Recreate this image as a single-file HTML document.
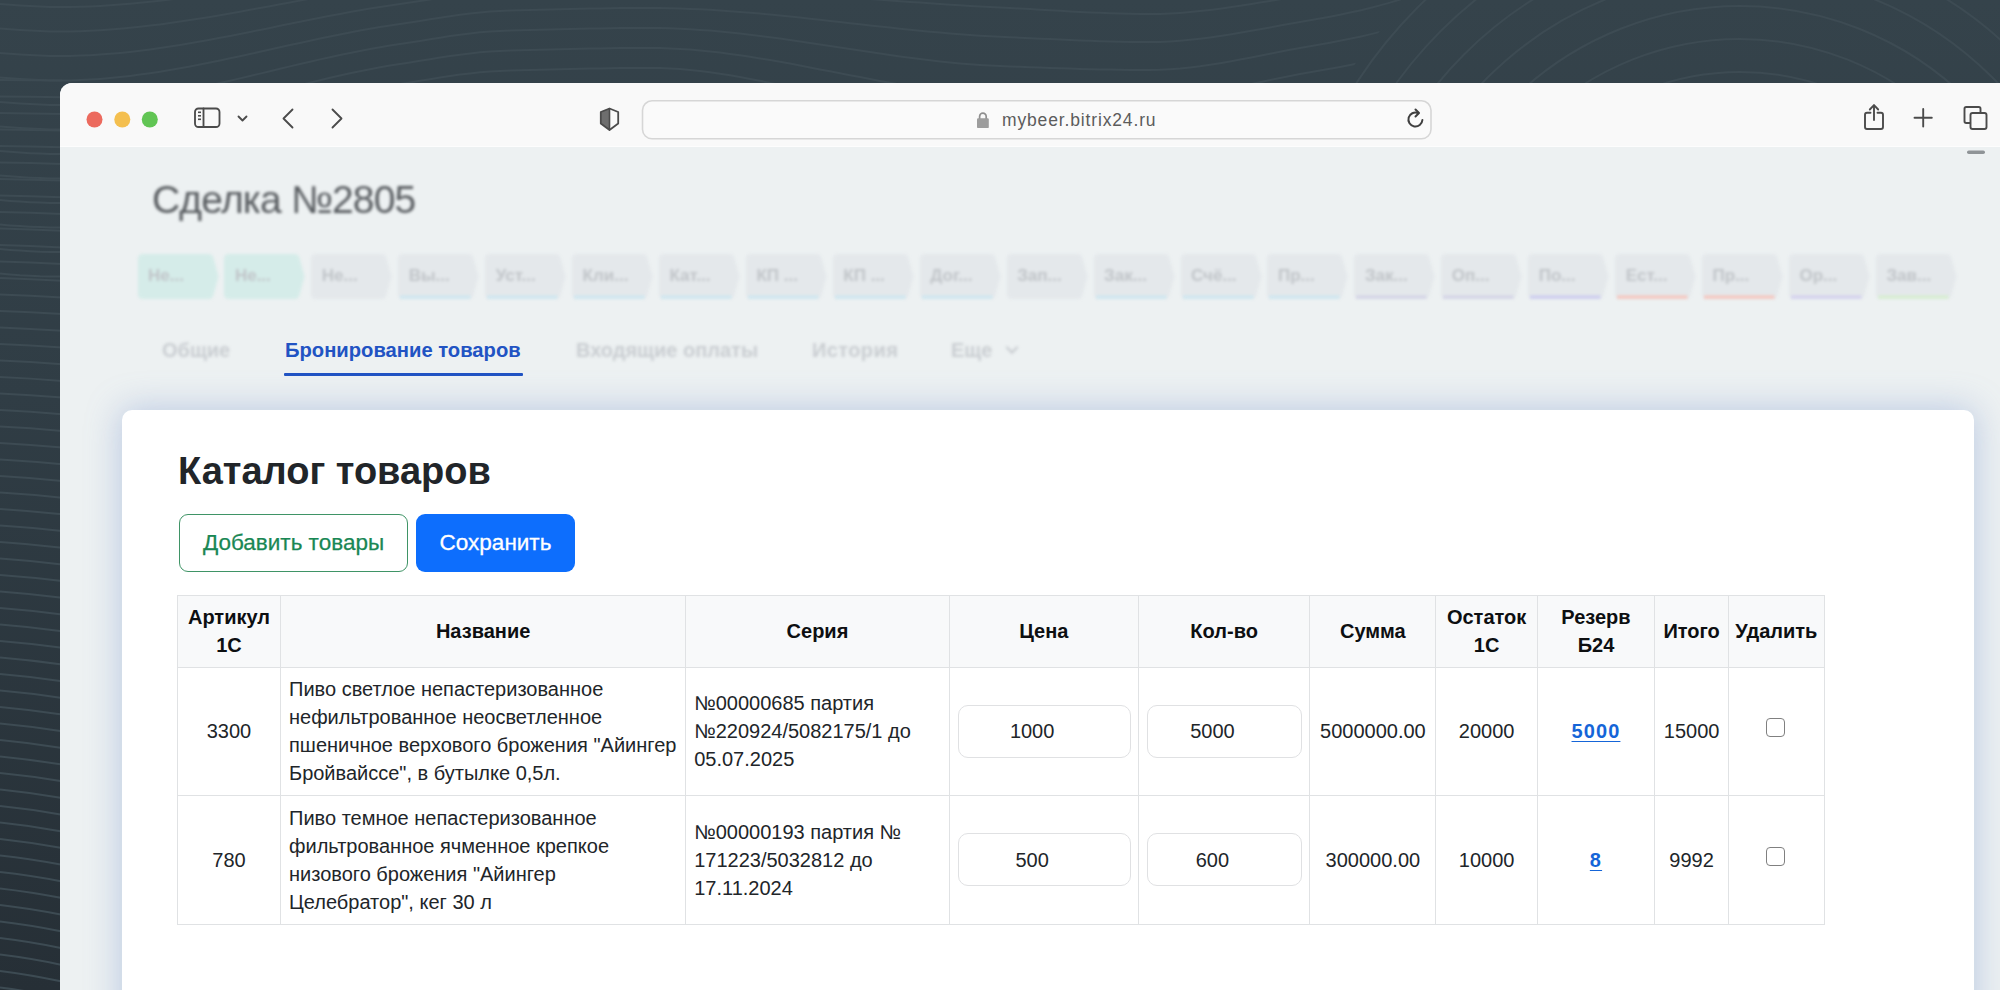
<!DOCTYPE html>
<html><head><meta charset="utf-8">
<style>
*{box-sizing:border-box}
html,body{margin:0;padding:0}
body{width:2000px;height:990px;overflow:hidden;position:relative;background:linear-gradient(180deg,#35434b 0%,#303d45 40%,#262f36 100%);font-family:"Liberation Sans",sans-serif;color:#212529}
.abs{position:absolute}
#bg{position:absolute;left:0;top:0}
#win{position:absolute;left:60px;top:83px;width:1980px;height:940px;border-top-left-radius:12px;overflow:hidden;background:#edf1f2}
#toolbar{position:absolute;left:0;top:0;width:1980px;height:64px;background:#f9f9f9;border-bottom:1.5px solid #fdfdfd}
.dot{position:absolute;width:16px;height:16px;border-radius:50%}
#blur{position:absolute;left:0;top:0;width:2000px;height:990px;filter:blur(1.4px)}
.title{position:absolute;left:152px;top:178.1px;font-size:39px;letter-spacing:-0.8px;color:#575b5f;white-space:nowrap;line-height:44px}
.stage{position:absolute;top:253.5px;width:81px;height:45px}
.stage span{position:absolute;left:12px;top:12px;font-size:16px;font-weight:700;color:#c3c7cb;white-space:nowrap}
.tab{position:absolute;top:337px;font-size:20px;font-weight:700;color:#c9cdd1;white-space:nowrap;line-height:26px}
#card{position:absolute;left:122px;top:410px;width:1852px;height:620px;background:#fff;border-radius:10px;box-shadow:0 0 34px 2px rgba(115,145,205,.40)}
.btn{display:flex;align-items:center;justify-content:center;font-size:22.5px;line-height:28px;white-space:nowrap}
#tbl{border-collapse:collapse;table-layout:fixed;width:1646.8px;font-size:20px;line-height:28px;color:#212529}
#tbl th,#tbl td{border:1px solid #e0e2e4;padding:7.75px 8px;vertical-align:middle;white-space:nowrap;overflow:visible}
#tbl th{background:#f8f9fa;font-weight:700;color:#0d0f11;text-align:center;height:70px;padding:7.5px 2px}
#tbl tr:not(.hd) td{height:126.5px}
#tbl td.c{text-align:center;padding:7.75px 2px}
#tbl td.l{text-align:left}
.inp{display:inline-flex;align-items:center;justify-content:center;height:53px;border:1px solid #e0e1e3;border-radius:10px;position:relative;top:-0.2px;left:0.3px;padding-right:24px;background:#fff}
#tbl a{color:#0d6efd;font-weight:700;text-decoration:underline;text-underline-offset:3px;text-decoration-thickness:1.2px;letter-spacing:1.1px;color:#1565d8}
.cb{display:inline-block;width:19px;height:19px;border:1.5px solid #808080;border-radius:4px;position:relative;top:-1px;left:-0.5px}
</style></head>
<body>
<svg id="bg" width="2000" height="990" viewBox="0 0 2000 990"><defs><mask id="m1"><rect x="0" y="0" width="2000" height="990" fill="#fff"/><circle cx="1740" cy="330" r="468" fill="#000"/></mask></defs><g fill="none" stroke="#3d4b53" stroke-width="2"><g mask="url(#m1)"><path d="M0,-20.5 L10,-19.8 L20,-19.1 L30,-18.4 L40,-17.9 L50,-17.6 L60,-17.5 L70,-17.6 L80,-17.7 L90,-18.1 L100,-18.5 L110,-19.0 L120,-19.6 L130,-20.3 L140,-21.1 L150,-22.0 L160,-23.0 L170,-24.0 L180,-25.1 L190,-26.3 L200,-27.6 L210,-28.8 L220,-30.2 L230,-31.5 L240,-32.9 L250,-34.4 L260,-35.9 L270,-37.3 L280,-38.8 L290,-40.3 L300,-41.9 L310,-43.4 L320,-44.9 L330,-46.4 L340,-47.8 L350,-49.3 L360,-50.7 L370,-52.1 L380,-53.4 L390,-54.7 L400,-56.0 L410,-57.3 L420,-58.8 L430,-60.4 L440,-62.0 L450,-63.6 L460,-65.1 L470,-66.4 L480,-67.6 L490,-68.5 L500,-69.0 L510,-69.3 L520,-69.6 L530,-69.9 L540,-70.1 L550,-70.3 L560,-70.5 L570,-70.7 L580,-70.9 L590,-71.0 L600,-71.2 L610,-71.3 L620,-71.5 L630,-71.6 L640,-71.8 L650,-72.0 L660,-72.2 L670,-72.5 L680,-72.7 L690,-73.0 L700,-73.2 L710,-73.5 L720,-73.8 L730,-74.1 L740,-74.4 L750,-74.7 L760,-75.0 L770,-75.4 L780,-75.7 L790,-76.0 L800,-76.3 L810,-76.6 L820,-76.9 L830,-77.2 L840,-77.5 L850,-77.8 L860,-78.1 L870,-78.3 L880,-78.6 L890,-78.8 L900,-79.1 L910,-79.3 L920,-79.5 L930,-79.6 L940,-79.8 L950,-79.9 L960,-80.0 L970,-80.1 L980,-80.2 L990,-80.2 L1000,-80.2 L1010,-80.1 L1020,-79.8 L1030,-79.2 L1040,-78.5 L1050,-77.6 L1060,-76.6 L1070,-75.6 L1080,-74.6 L1090,-73.6 L1100,-72.7 L1110,-71.8 L1120,-71.1 L1130,-70.5 L1140,-70.1 L1150,-70.0 L1160,-70.1 L1170,-70.3 L1180,-70.6 L1190,-71.1 L1200,-71.7 L1210,-72.4 L1220,-73.2 L1230,-74.1 L1240,-75.1 L1250,-76.1 L1260,-77.2 L1270,-78.4 L1280,-79.5 L1290,-80.8 L1300,-82.0 L1310,-83.4 L1320,-85.2 L1330,-87.2 L1340,-89.5 L1350,-92.0 L1360,-94.7 L1370,-97.6 L1380,-100.5 L1390,-103.5 L1400,-106.5 L1410,-109.7 L1420,-113.1 L1430,-116.9 L1440,-120.8 L1450,-125.0 L1460,-129.6 L1470,-134.7 L1480,-140.0 L1490,-145.2 L1500,-150.0 L1510,-154.5 L1520,-158.9 L1530,-163.1 L1540,-167.2 L1550,-171.2 L1560,-175.0"/><path d="M0,4.0 L10,4.8 L20,5.5 L30,6.1 L40,6.6 L50,6.9 L60,7.0 L70,6.9 L80,6.7 L90,6.4 L100,5.9 L110,5.3 L120,4.6 L130,3.8 L140,2.8 L150,1.8 L160,0.7 L170,-0.5 L180,-1.8 L190,-3.1 L200,-4.5 L210,-6.0 L220,-7.5 L230,-9.0 L240,-10.6 L250,-12.3 L260,-13.9 L270,-15.6 L280,-17.3 L290,-18.9 L300,-20.6 L310,-22.3 L320,-24.0 L330,-25.6 L340,-27.2 L350,-28.8 L360,-30.4 L370,-31.8 L380,-33.3 L390,-34.7 L400,-36.0 L410,-37.4 L420,-38.9 L430,-40.5 L440,-42.1 L450,-43.7 L460,-45.1 L470,-46.5 L480,-47.6 L490,-48.5 L500,-49.0 L510,-49.4 L520,-49.7 L530,-50.0 L540,-50.3 L550,-50.6 L560,-50.8 L570,-51.1 L580,-51.3 L590,-51.5 L600,-51.6 L610,-51.8 L620,-51.9 L630,-51.9 L640,-52.0 L650,-52.0 L660,-52.0 L670,-52.0 L680,-52.0 L690,-52.0 L700,-52.0 L710,-52.0 L720,-52.0 L730,-52.0 L740,-51.9 L750,-51.9 L760,-51.9 L770,-51.9 L780,-51.9 L790,-51.9 L800,-51.8 L810,-51.8 L820,-51.8 L830,-51.8 L840,-51.7 L850,-51.7 L860,-51.7 L870,-51.6 L880,-51.6 L890,-51.6 L900,-51.5 L910,-51.5 L920,-51.4 L930,-51.4 L940,-51.3 L950,-51.3 L960,-51.2 L970,-51.2 L980,-51.1 L990,-51.1 L1000,-51.0 L1010,-50.8 L1020,-50.5 L1030,-49.9 L1040,-49.3 L1050,-48.5 L1060,-47.7 L1070,-46.8 L1080,-45.9 L1090,-45.1 L1100,-44.3 L1110,-43.5 L1120,-42.9 L1130,-42.4 L1140,-42.1 L1150,-42.0 L1160,-42.1 L1170,-42.4 L1180,-42.8 L1190,-43.4 L1200,-44.1 L1210,-44.9 L1220,-45.9 L1230,-46.9 L1240,-48.1 L1250,-49.3 L1260,-50.6 L1270,-51.9 L1280,-53.2 L1290,-54.6 L1300,-56.0 L1310,-57.5 L1320,-59.3 L1330,-61.3 L1340,-63.5 L1350,-65.9 L1360,-68.4 L1370,-71.2 L1380,-74.0 L1390,-77.0 L1400,-80.0 L1410,-83.3 L1420,-87.1 L1430,-91.2 L1440,-95.6 L1450,-100.0 L1460,-104.7 L1470,-109.8 L1480,-115.1 L1490,-120.2 L1500,-125.0 L1510,-129.5 L1520,-133.9 L1530,-138.1 L1540,-142.2 L1550,-146.2 L1560,-150.0"/><path d="M0,28.5 L10,29.3 L20,30.0 L30,30.6 L40,31.1 L50,31.4 L60,31.5 L70,31.4 L80,31.2 L90,30.8 L100,30.2 L110,29.6 L120,28.8 L130,27.8 L140,26.8 L150,25.6 L160,24.4 L170,23.0 L180,21.6 L190,20.1 L200,18.5 L210,16.9 L220,15.2 L230,13.4 L240,11.7 L250,9.8 L260,8.0 L270,6.2 L280,4.3 L290,2.4 L300,0.6 L310,-1.3 L320,-3.1 L330,-4.9 L340,-6.6 L350,-8.4 L360,-10.0 L370,-11.6 L380,-13.2 L390,-14.6 L400,-16.0 L410,-17.4 L420,-18.9 L430,-20.5 L440,-22.2 L450,-23.7 L460,-25.2 L470,-26.5 L480,-27.6 L490,-28.5 L500,-29.0 L510,-29.4 L520,-29.7 L530,-30.0 L540,-30.3 L550,-30.6 L560,-30.8 L570,-31.1 L580,-31.3 L590,-31.5 L600,-31.6 L610,-31.8 L620,-31.9 L630,-31.9 L640,-32.0 L650,-32.0 L660,-32.0 L670,-31.9 L680,-31.9 L690,-31.8 L700,-31.7 L710,-31.5 L720,-31.4 L730,-31.2 L740,-31.0 L750,-30.8 L760,-30.5 L770,-30.3 L780,-30.0 L790,-29.7 L800,-29.4 L810,-29.1 L820,-28.7 L830,-28.4 L840,-28.0 L850,-27.7 L860,-27.3 L870,-26.9 L880,-26.5 L890,-26.2 L900,-25.8 L910,-25.4 L920,-25.0 L930,-24.6 L940,-24.1 L950,-23.7 L960,-23.3 L970,-22.9 L980,-22.5 L990,-22.1 L1000,-21.8 L1010,-21.3 L1020,-20.8 L1030,-20.2 L1040,-19.6 L1050,-18.9 L1060,-18.2 L1070,-17.5 L1080,-16.8 L1090,-16.2 L1100,-15.6 L1110,-15.1 L1120,-14.6 L1130,-14.3 L1140,-14.1 L1150,-14.0 L1160,-14.1 L1170,-14.4 L1180,-14.9 L1190,-15.6 L1200,-16.5 L1210,-17.5 L1220,-18.6 L1230,-19.8 L1240,-21.1 L1250,-22.5 L1260,-24.0 L1270,-25.4 L1280,-27.0 L1290,-28.5 L1300,-30.0 L1310,-31.6 L1320,-33.4 L1330,-35.3 L1340,-37.4 L1350,-39.7 L1360,-42.1 L1370,-44.8 L1380,-47.5 L1390,-50.4 L1400,-53.5 L1410,-57.0 L1420,-61.1 L1430,-65.6 L1440,-70.3 L1450,-75.0 L1460,-79.8 L1470,-84.9 L1480,-90.1 L1490,-95.2 L1500,-100.0 L1510,-104.5 L1520,-108.9 L1530,-113.1 L1540,-117.2 L1550,-121.2 L1560,-125.0"/><path d="M0,53.0 L10,53.8 L20,54.5 L30,55.1 L40,55.6 L50,55.9 L60,56.0 L70,55.9 L80,55.6 L90,55.2 L100,54.6 L110,53.8 L120,52.9 L130,51.9 L140,50.7 L150,49.4 L160,48.0 L170,46.5 L180,44.9 L190,43.3 L200,41.5 L210,39.7 L220,37.8 L230,35.9 L240,33.9 L250,31.9 L260,29.9 L270,27.9 L280,25.8 L290,23.8 L300,21.7 L310,19.7 L320,17.8 L330,15.8 L340,13.9 L350,12.1 L360,10.3 L370,8.6 L380,7.0 L390,5.4 L400,4.0 L410,2.5 L420,1.0 L430,-0.6 L440,-2.2 L450,-3.8 L460,-5.2 L470,-6.5 L480,-7.6 L490,-8.5 L500,-9.0 L510,-9.4 L520,-9.7 L530,-10.0 L540,-10.3 L550,-10.6 L560,-10.8 L570,-11.1 L580,-11.3 L590,-11.5 L600,-11.6 L610,-11.8 L620,-11.9 L630,-11.9 L640,-12.0 L650,-12.0 L660,-12.0 L670,-11.9 L680,-11.7 L690,-11.5 L700,-11.2 L710,-10.9 L720,-10.5 L730,-10.1 L740,-9.6 L750,-9.1 L760,-8.6 L770,-8.0 L780,-7.4 L790,-6.7 L800,-6.1 L810,-5.4 L820,-4.7 L830,-4.0 L840,-3.3 L850,-2.5 L860,-1.8 L870,-1.0 L880,-0.3 L890,0.5 L900,1.2 L910,1.9 L920,2.6 L930,3.3 L940,4.0 L950,4.7 L960,5.3 L970,5.9 L980,6.5 L990,7.0 L1000,7.5 L1010,8.0 L1020,8.5 L1030,9.1 L1040,9.7 L1050,10.3 L1060,10.8 L1070,11.4 L1080,11.9 L1090,12.4 L1100,12.8 L1110,13.2 L1120,13.6 L1130,13.8 L1140,13.9 L1150,14.0 L1160,13.9 L1170,13.5 L1180,12.9 L1190,12.1 L1200,11.1 L1210,10.0 L1220,8.7 L1230,7.3 L1240,5.8 L1250,4.2 L1260,2.6 L1270,1.0 L1280,-0.7 L1290,-2.4 L1300,-4.0 L1310,-5.7 L1320,-7.4 L1330,-9.3 L1340,-11.4 L1350,-13.5 L1360,-15.9 L1370,-18.4 L1380,-21.0 L1390,-23.9 L1400,-27.0 L1410,-30.7 L1420,-35.1 L1430,-40.0 L1440,-45.1 L1450,-50.0 L1460,-54.9 L1470,-60.1 L1480,-65.2 L1490,-70.2 L1500,-75.0 L1510,-79.5 L1520,-83.9 L1530,-88.1 L1540,-92.2 L1550,-96.2 L1560,-100.0"/><path d="M0,77.5 L10,78.3 L20,79.0 L30,79.6 L40,80.1 L50,80.4 L60,80.5 L70,80.4 L80,80.1 L90,79.6 L100,78.9 L110,78.1 L120,77.1 L130,75.9 L140,74.6 L150,73.2 L160,71.7 L170,70.0 L180,68.3 L190,66.4 L200,64.5 L210,62.5 L220,60.4 L230,58.3 L240,56.2 L250,54.0 L260,51.8 L270,49.5 L280,47.3 L290,45.1 L300,42.9 L310,40.7 L320,38.6 L330,36.5 L340,34.5 L350,32.5 L360,30.6 L370,28.8 L380,27.1 L390,25.5 L400,24.0 L410,22.5 L420,20.9 L430,19.3 L440,17.7 L450,16.2 L460,14.7 L470,13.4 L480,12.4 L490,11.5 L500,11.0 L510,10.6 L520,10.3 L530,10.0 L540,9.7 L550,9.4 L560,9.2 L570,8.9 L580,8.7 L590,8.5 L600,8.4 L610,8.2 L620,8.1 L630,8.1 L640,8.0 L650,8.0 L660,8.1 L670,8.2 L680,8.5 L690,8.9 L700,9.3 L710,9.8 L720,10.5 L730,11.2 L740,11.9 L750,12.7 L760,13.6 L770,14.6 L780,15.5 L790,16.6 L800,17.6 L810,18.7 L820,19.8 L830,20.9 L840,22.0 L850,23.2 L860,24.3 L870,25.4 L880,26.5 L890,27.6 L900,28.7 L910,29.7 L920,30.7 L930,31.7 L940,32.6 L950,33.4 L960,34.2 L970,35.0 L980,35.7 L990,36.2 L1000,36.8 L1010,37.2 L1020,37.7 L1030,38.2 L1040,38.7 L1050,39.1 L1060,39.6 L1070,40.0 L1080,40.4 L1090,40.8 L1100,41.2 L1110,41.4 L1120,41.7 L1130,41.9 L1140,42.0 L1150,42.0 L1160,41.9 L1170,41.4 L1180,40.7 L1190,39.8 L1200,38.7 L1210,37.4 L1220,36.0 L1230,34.4 L1240,32.7 L1250,31.0 L1260,29.2 L1270,27.4 L1280,25.5 L1290,23.7 L1300,22.0 L1310,20.3 L1320,18.5 L1330,16.7 L1340,14.7 L1350,12.6 L1360,10.4 L1370,8.0 L1380,5.4 L1390,2.6 L1400,-0.5 L1410,-4.3 L1420,-9.1 L1430,-14.4 L1440,-19.8 L1450,-25.0 L1460,-30.0 L1470,-35.2 L1480,-40.3 L1490,-45.3 L1500,-50.0 L1510,-54.5 L1520,-58.9 L1530,-63.1 L1540,-67.2 L1550,-71.2 L1560,-75.0"/><path d="M0,102.0 L10,102.8 L20,103.5 L30,104.1 L40,104.6 L50,104.9 L60,105.0 L70,104.9 L80,104.6 L90,104.0 L100,103.3 L110,102.3 L120,101.2 L130,100.0 L140,98.6 L150,97.0 L160,95.3 L170,93.5 L180,91.6 L190,89.6 L200,87.5 L210,85.3 L220,83.0 L230,80.7 L240,78.4 L250,76.0 L260,73.6 L270,71.2 L280,68.8 L290,66.4 L300,64.0 L310,61.7 L320,59.4 L330,57.2 L340,55.0 L350,52.9 L360,50.9 L370,49.0 L380,47.2 L390,45.5 L400,44.0 L410,42.5 L420,40.9 L430,39.3 L440,37.7 L450,36.1 L460,34.7 L470,33.4 L480,32.3 L490,31.5 L500,31.0 L510,30.6 L520,30.3 L530,30.0 L540,29.7 L550,29.4 L560,29.2 L570,28.9 L580,28.7 L590,28.5 L600,28.4 L610,28.2 L620,28.1 L630,28.1 L640,28.0 L650,28.0 L660,28.1 L670,28.3 L680,28.7 L690,29.2 L700,29.9 L710,30.6 L720,31.5 L730,32.5 L740,33.6 L750,34.7 L760,36.0 L770,37.3 L780,38.6 L790,40.0 L800,41.5 L810,43.0 L820,44.5 L830,46.0 L840,47.6 L850,49.1 L860,50.6 L870,52.1 L880,53.6 L890,55.0 L900,56.4 L910,57.8 L920,59.1 L930,60.3 L940,61.4 L950,62.4 L960,63.4 L970,64.2 L980,64.9 L990,65.5 L1000,66.0 L1010,66.4 L1020,66.8 L1030,67.2 L1040,67.6 L1050,67.9 L1060,68.3 L1070,68.6 L1080,68.9 L1090,69.2 L1100,69.4 L1110,69.6 L1120,69.8 L1130,69.9 L1140,70.0 L1150,70.0 L1160,69.8 L1170,69.3 L1180,68.6 L1190,67.5 L1200,66.3 L1210,64.8 L1220,63.2 L1230,61.5 L1240,59.6 L1250,57.7 L1260,55.7 L1270,53.7 L1280,51.7 L1290,49.8 L1300,48.0 L1310,46.2 L1320,44.5 L1330,42.7 L1340,40.8 L1350,38.8 L1360,36.7 L1370,34.4 L1380,31.9 L1390,29.1 L1400,26.0 L1410,22.0 L1420,17.0 L1430,11.3 L1440,5.4 L1450,0.0 L1460,-5.1 L1470,-10.3 L1480,-15.4 L1490,-20.3 L1500,-25.0 L1510,-29.5 L1520,-33.9 L1530,-38.1 L1540,-42.2 L1550,-46.2 L1560,-50.0"/><path d="M0,126.5 L10,127.3 L20,128.0 L30,128.6 L40,129.1 L50,129.4 L60,129.5 L70,129.4 L80,129.0 L90,128.4 L100,127.6 L110,126.6 L120,125.4 L130,124.0 L140,122.5 L150,120.8 L160,118.9 L170,117.0 L180,114.9 L190,112.7 L200,110.4 L210,108.0 L220,105.6 L230,103.1 L240,100.6 L250,98.0 L260,95.4 L270,92.8 L280,90.3 L290,87.7 L300,85.1 L310,82.6 L320,80.2 L330,77.8 L340,75.5 L350,73.3 L360,71.2 L370,69.2 L380,67.3 L390,65.6 L400,64.0 L410,62.5 L420,60.8 L430,59.2 L440,57.6 L450,56.1 L460,54.7 L470,53.4 L480,52.3 L490,51.5 L500,51.0 L510,50.6 L520,50.3 L530,50.0 L540,49.7 L550,49.4 L560,49.2 L570,48.9 L580,48.7 L590,48.5 L600,48.4 L610,48.2 L620,48.1 L630,48.1 L640,48.0 L650,48.0 L660,48.1 L670,48.4 L680,48.9 L690,49.6 L700,50.4 L710,51.4 L720,52.6 L730,53.9 L740,55.3 L750,56.8 L760,58.4 L770,60.1 L780,61.8 L790,63.6 L800,65.5 L810,67.4 L820,69.4 L830,71.3 L840,73.3 L850,75.2 L860,77.1 L870,79.0 L880,80.9 L890,82.7 L900,84.4 L910,86.0 L920,87.6 L930,89.0 L940,90.4 L950,91.6 L960,92.6 L970,93.5 L980,94.3 L990,94.9 L1000,95.2 L1010,95.5 L1020,95.8 L1030,96.1 L1040,96.4 L1050,96.6 L1060,96.9 L1070,97.1 L1080,97.3 L1090,97.5 L1100,97.6 L1110,97.7 L1120,97.9 L1130,97.9 L1140,98.0 L1150,98.0 L1160,97.8 L1170,97.3 L1180,96.4 L1190,95.2 L1200,93.8 L1210,92.2 L1220,90.4 L1230,88.5 L1240,86.5 L1250,84.3 L1260,82.2 L1270,80.1 L1280,77.9 L1290,75.9 L1300,74.0 L1310,72.2 L1320,70.4 L1330,68.7 L1340,66.9 L1350,65.0 L1360,63.0 L1370,60.8 L1380,58.3 L1390,55.6 L1400,52.5 L1410,48.4 L1420,43.0 L1430,36.9 L1440,30.7 L1450,25.0 L1460,19.8 L1470,14.6 L1480,9.6 L1490,4.7 L1500,0.0 L1510,-4.5 L1520,-8.9 L1530,-13.1 L1540,-17.2 L1550,-21.2 L1560,-25.0"/><path d="M0,151.0 L10,151.8 L20,152.6 L30,153.2 L40,153.6 L50,153.9 L60,154.0 L70,153.9 L80,153.5 L90,152.8 L100,152.0 L110,150.9 L120,149.6 L130,148.1 L140,146.4 L150,144.6 L160,142.6 L170,140.4 L180,138.2 L190,135.8 L200,133.4 L210,130.8 L220,128.2 L230,125.5 L240,122.8 L250,120.0 L260,117.2 L270,114.5 L280,111.7 L290,108.9 L300,106.2 L310,103.6 L320,101.0 L330,98.4 L340,96.0 L350,93.7 L360,91.4 L370,89.4 L380,87.4 L390,85.6 L400,84.0 L410,82.4 L420,80.8 L430,79.2 L440,77.6 L450,76.0 L460,74.6 L470,73.4 L480,72.3 L490,71.5 L500,71.0 L510,70.6 L520,70.3 L530,70.0 L540,69.7 L550,69.4 L560,69.2 L570,68.9 L580,68.7 L590,68.5 L600,68.4 L610,68.2 L620,68.1 L630,68.1 L640,68.0 L650,68.0 L660,68.1 L670,68.5 L680,69.1 L690,70.0 L700,71.0 L710,72.3 L720,73.7 L730,75.3 L740,77.0 L750,78.9 L760,80.8 L770,82.9 L780,85.1 L790,87.3 L800,89.6 L810,92.0 L820,94.3 L830,96.7 L840,99.1 L850,101.4 L860,103.8 L870,106.0 L880,108.3 L890,110.4 L900,112.4 L910,114.4 L920,116.2 L930,117.9 L940,119.4 L950,120.8 L960,121.9 L970,122.9 L980,123.7 L990,124.2 L1000,124.5 L1010,124.7 L1020,124.8 L1030,125.0 L1040,125.1 L1050,125.3 L1060,125.4 L1070,125.5 L1080,125.6 L1090,125.7 L1100,125.8 L1110,125.9 L1120,125.9 L1130,126.0 L1140,126.0 L1150,126.0 L1160,125.8 L1170,125.2 L1180,124.2 L1190,122.9 L1200,121.4 L1210,119.6 L1220,117.6 L1230,115.5 L1240,113.3 L1250,111.0 L1260,108.7 L1270,106.4 L1280,104.1 L1290,102.0 L1300,100.0 L1310,98.2 L1320,96.4 L1330,94.7 L1340,93.0 L1350,91.2 L1360,89.2 L1370,87.1 L1380,84.7 L1390,82.1 L1400,79.0 L1410,74.8 L1420,69.0 L1430,62.5 L1440,55.9 L1450,50.0 L1460,44.7 L1470,39.5 L1480,34.5 L1490,29.7 L1500,25.0 L1510,20.5 L1520,16.1 L1530,11.9 L1540,7.8 L1550,3.8 L1560,-0.0"/><path d="M0,175.5 L10,176.3 L20,177.1 L30,177.7 L40,178.1 L50,178.4 L60,178.5 L70,178.4 L80,177.9 L90,177.2 L100,176.3 L110,175.1 L120,173.7 L130,172.1 L140,170.3 L150,168.3 L160,166.2 L170,163.9 L180,161.5 L190,158.9 L200,156.3 L210,153.6 L220,150.7 L230,147.9 L240,145.0 L250,142.0 L260,139.0 L270,136.1 L280,133.1 L290,130.2 L300,127.3 L310,124.5 L320,121.7 L330,119.1 L340,116.5 L350,114.0 L360,111.7 L370,109.5 L380,107.5 L390,105.7 L400,104.0 L410,102.4 L420,100.8 L430,99.1 L440,97.5 L450,96.0 L460,94.6 L470,93.4 L480,92.3 L490,91.5 L500,91.0 L510,90.6 L520,90.3 L530,90.0 L540,89.7 L550,89.4 L560,89.2 L570,88.9 L580,88.7 L590,88.5 L600,88.4 L610,88.2 L620,88.1 L630,88.1 L640,88.0 L650,88.0 L660,88.2 L670,88.6 L680,89.4 L690,90.4 L700,91.6 L710,93.1 L720,94.8 L730,96.7 L740,98.8 L750,101.0 L760,103.3 L770,105.8 L780,108.4 L790,111.0 L800,113.8 L810,116.5 L820,119.3 L830,122.2 L840,125.0 L850,127.7 L860,130.5 L870,133.1 L880,135.7 L890,138.2 L900,140.6 L910,142.8 L920,144.9 L930,146.8 L940,148.5 L950,150.0 L960,151.3 L970,152.3 L980,153.1 L990,153.6 L1000,153.8 L1010,153.8 L1020,153.8 L1030,153.8 L1040,153.9 L1050,153.9 L1060,153.9 L1070,153.9 L1080,153.9 L1090,154.0 L1100,154.0 L1110,154.0 L1120,154.0 L1130,154.0 L1140,154.0 L1150,154.0 L1160,153.8 L1170,153.1 L1180,152.0 L1190,150.6 L1200,148.9 L1210,147.0 L1220,144.8 L1230,142.5 L1240,140.1 L1250,137.6 L1260,135.1 L1270,132.7 L1280,130.3 L1290,128.1 L1300,126.0 L1310,124.1 L1320,122.4 L1330,120.7 L1340,119.1 L1350,117.4 L1360,115.5 L1370,113.5 L1380,111.2 L1390,108.5 L1400,105.5 L1410,101.1 L1420,95.1 L1430,88.1 L1440,81.2 L1450,75.0 L1460,69.6 L1470,64.4 L1480,59.4 L1490,54.6 L1500,50.0 L1510,45.5 L1520,41.1 L1530,36.9 L1540,32.8 L1550,28.8 L1560,25.0"/><path d="M0,200.0 L10,200.9 L20,201.6 L30,202.2 L40,202.6 L50,202.9 L60,203.0 L70,202.8 L80,202.4 L90,201.6 L100,200.6 L110,199.4 L120,197.9 L130,196.1 L140,194.2 L150,192.1 L160,189.8 L170,187.4 L180,184.8 L190,182.1 L200,179.2 L210,176.3 L220,173.3 L230,170.2 L240,167.1 L250,164.0 L260,160.8 L270,157.7 L280,154.5 L290,151.4 L300,148.4 L310,145.4 L320,142.5 L330,139.7 L340,137.0 L350,134.4 L360,132.0 L370,129.7 L380,127.6 L390,125.7 L400,124.0 L410,122.4 L420,120.7 L430,119.1 L440,117.5 L450,116.0 L460,114.6 L470,113.3 L480,112.3 L490,111.5 L500,111.0 L510,110.6 L520,110.3 L530,110.0 L540,109.7 L550,109.4 L560,109.2 L570,108.9 L580,108.7 L590,108.5 L600,108.4 L610,108.2 L620,108.1 L630,108.1 L640,108.0 L650,108.0 L660,108.2 L670,108.7 L680,109.6 L690,110.7 L700,112.2 L710,113.9 L720,115.8 L730,118.0 L740,120.3 L750,122.9 L760,125.6 L770,128.4 L780,131.4 L790,134.4 L800,137.5 L810,140.7 L820,143.9 L830,147.1 L840,150.3 L850,153.5 L860,156.6 L870,159.6 L880,162.6 L890,165.4 L900,168.1 L910,170.7 L920,173.0 L930,175.2 L940,177.1 L950,178.8 L960,180.3 L970,181.4 L980,182.3 L990,182.8 L1000,183.0 L1010,183.0 L1020,183.0 L1030,183.0 L1040,182.9 L1050,182.9 L1060,182.8 L1070,182.8 L1080,182.7 L1090,182.6 L1100,182.5 L1110,182.5 L1120,182.4 L1130,182.2 L1140,182.1 L1150,182.0 L1160,181.6 L1170,180.8 L1180,179.6 L1190,178.0 L1200,176.2 L1210,174.0 L1220,171.7 L1230,169.3 L1240,166.7 L1250,164.1 L1260,161.5 L1270,158.9 L1280,156.4 L1290,154.1 L1300,152.0 L1310,150.1 L1320,148.4 L1330,146.8 L1340,145.2 L1350,143.5 L1360,141.8 L1370,139.8 L1380,137.6 L1390,135.0 L1400,132.0 L1410,127.5 L1420,121.1 L1430,113.8 L1440,106.4 L1450,100.0 L1460,94.5 L1470,89.3 L1480,84.4 L1490,79.6 L1500,75.0 L1510,70.5 L1520,66.1 L1530,61.9 L1540,57.8 L1550,53.8 L1560,50.0"/><path d="M0,224.5 L10,225.4 L20,226.1 L30,226.7 L40,227.1 L50,227.4 L60,227.5 L70,227.3 L80,226.8 L90,226.1 L100,225.0 L110,223.6 L120,222.0 L130,220.2 L140,218.1 L150,215.9 L160,213.4 L170,210.8 L180,208.1 L190,205.2 L200,202.1 L210,199.0 L220,195.8 L230,192.6 L240,189.3 L250,186.0 L260,182.6 L270,179.3 L280,176.0 L290,172.7 L300,169.4 L310,166.3 L320,163.2 L330,160.3 L340,157.4 L350,154.7 L360,152.2 L370,149.9 L380,147.7 L390,145.7 L400,144.0 L410,142.4 L420,140.7 L430,139.1 L440,137.5 L450,135.9 L460,134.6 L470,133.3 L480,132.3 L490,131.5 L500,131.0 L510,130.6 L520,130.3 L530,130.0 L540,129.7 L550,129.4 L560,129.2 L570,128.9 L580,128.7 L590,128.5 L600,128.4 L610,128.2 L620,128.1 L630,128.1 L640,128.0 L650,128.0 L660,128.2 L670,128.8 L680,129.8 L690,131.0 L700,132.7 L710,134.6 L720,136.8 L730,139.2 L740,141.8 L750,144.7 L760,147.7 L770,150.9 L780,154.2 L790,157.7 L800,161.2 L810,164.7 L820,168.3 L830,171.9 L840,175.5 L850,179.1 L860,182.6 L870,186.0 L880,189.3 L890,192.5 L900,195.5 L910,198.4 L920,201.1 L930,203.5 L940,205.7 L950,207.6 L960,209.2 L970,210.5 L980,211.5 L990,212.0 L1000,212.2 L1010,212.2 L1020,212.2 L1030,212.2 L1040,212.1 L1050,212.0 L1060,211.9 L1070,211.7 L1080,211.6 L1090,211.4 L1100,211.2 L1110,211.0 L1120,210.8 L1130,210.5 L1140,210.3 L1150,210.0 L1160,209.5 L1170,208.5 L1180,207.1 L1190,205.4 L1200,203.3 L1210,201.1 L1220,198.6 L1230,196.0 L1240,193.2 L1250,190.5 L1260,187.8 L1270,185.1 L1280,182.5 L1290,180.2 L1300,178.0 L1310,176.1 L1320,174.4 L1330,172.8 L1340,171.3 L1350,169.7 L1360,168.0 L1370,166.2 L1380,164.0 L1390,161.5 L1400,158.5 L1410,153.9 L1420,147.1 L1430,139.4 L1440,131.6 L1450,125.0 L1460,119.5 L1470,114.3 L1480,109.3 L1490,104.6 L1500,100.0 L1510,95.5 L1520,91.1 L1530,86.9 L1540,82.8 L1550,78.8 L1560,75.0"/><path d="M0,249.0 L10,249.9 L20,250.6 L30,251.2 L40,251.7 L50,251.9 L60,252.0 L70,251.8 L80,251.3 L90,250.5 L100,249.3 L110,247.9 L120,246.2 L130,244.2 L140,242.0 L150,239.6 L160,237.0 L170,234.3 L180,231.3 L190,228.3 L200,225.1 L210,221.8 L220,218.4 L230,214.9 L240,211.4 L250,207.9 L260,204.4 L270,200.9 L280,197.3 L290,193.9 L300,190.5 L310,187.2 L320,184.0 L330,180.9 L340,177.9 L350,175.1 L360,172.5 L370,170.0 L380,167.8 L390,165.8 L400,164.0 L410,162.3 L420,160.7 L430,159.0 L440,157.4 L450,155.9 L460,154.5 L470,153.3 L480,152.3 L490,151.5 L500,151.0 L510,150.6 L520,150.3 L530,150.0 L540,149.7 L550,149.4 L560,149.2 L570,148.9 L580,148.7 L590,148.5 L600,148.4 L610,148.2 L620,148.1 L630,148.1 L640,148.0 L650,148.0 L660,148.2 L670,148.9 L680,149.9 L690,151.4 L700,153.2 L710,155.3 L720,157.7 L730,160.4 L740,163.4 L750,166.5 L760,169.9 L770,173.4 L780,177.1 L790,180.9 L800,184.8 L810,188.8 L820,192.7 L830,196.8 L840,200.7 L850,204.7 L860,208.6 L870,212.4 L880,216.1 L890,219.6 L900,223.0 L910,226.1 L920,229.1 L930,231.8 L940,234.2 L950,236.3 L960,238.1 L970,239.6 L980,240.6 L990,241.3 L1000,241.5 L1010,241.5 L1020,241.4 L1030,241.3 L1040,241.2 L1050,241.1 L1060,240.9 L1070,240.7 L1080,240.4 L1090,240.1 L1100,239.8 L1110,239.5 L1120,239.2 L1130,238.8 L1140,238.4 L1150,238.0 L1160,237.3 L1170,236.2 L1180,234.6 L1190,232.7 L1200,230.5 L1210,228.1 L1220,225.4 L1230,222.7 L1240,219.8 L1250,216.9 L1260,214.1 L1270,211.3 L1280,208.6 L1290,206.2 L1300,204.0 L1310,202.1 L1320,200.4 L1330,198.9 L1340,197.4 L1350,195.9 L1360,194.3 L1370,192.5 L1380,190.4 L1390,187.9 L1400,185.0 L1410,180.3 L1420,173.2 L1430,165.0 L1440,156.9 L1450,150.0 L1460,144.4 L1470,139.2 L1480,134.3 L1490,129.6 L1500,125.0 L1510,120.5 L1520,116.1 L1530,111.9 L1540,107.8 L1550,103.8 L1560,100.0"/><path d="M0,273.5 L10,274.4 L20,275.2 L30,275.7 L40,276.2 L50,276.4 L60,276.5 L70,276.3 L80,275.8 L90,274.9 L100,273.6 L110,272.1 L120,270.3 L130,268.2 L140,265.9 L150,263.4 L160,260.6 L170,257.7 L180,254.6 L190,251.3 L200,248.0 L210,244.5 L220,240.9 L230,237.3 L240,233.6 L250,229.9 L260,226.1 L270,222.4 L280,218.7 L290,215.1 L300,211.5 L310,208.1 L320,204.7 L330,201.4 L340,198.4 L350,195.4 L360,192.7 L370,190.2 L380,187.9 L390,185.8 L400,184.0 L410,182.3 L420,180.6 L430,179.0 L440,177.4 L450,175.9 L460,174.5 L470,173.3 L480,172.3 L490,171.5 L500,171.0 L510,170.6 L520,170.3 L530,170.0 L540,169.7 L550,169.4 L560,169.2 L570,168.9 L580,168.7 L590,168.5 L600,168.4 L610,168.2 L620,168.1 L630,168.1 L640,168.0 L650,168.0 L660,168.2 L670,169.0 L680,170.1 L690,171.7 L700,173.7 L710,176.0 L720,178.7 L730,181.7 L740,184.9 L750,188.4 L760,192.1 L770,196.0 L780,200.0 L790,204.2 L800,208.4 L810,212.8 L820,217.2 L830,221.6 L840,226.0 L850,230.3 L860,234.6 L870,238.8 L880,242.8 L890,246.7 L900,250.4 L910,253.9 L920,257.1 L930,260.1 L940,262.7 L950,265.1 L960,267.0 L970,268.6 L980,269.8 L990,270.5 L1000,270.8 L1010,270.7 L1020,270.6 L1030,270.5 L1040,270.4 L1050,270.1 L1060,269.9 L1070,269.6 L1080,269.3 L1090,268.9 L1100,268.5 L1110,268.0 L1120,267.6 L1130,267.1 L1140,266.5 L1150,266.0 L1160,265.2 L1170,263.9 L1180,262.2 L1190,260.1 L1200,257.7 L1210,255.1 L1220,252.3 L1230,249.4 L1240,246.3 L1250,243.3 L1260,240.3 L1270,237.5 L1280,234.7 L1290,232.2 L1300,230.0 L1310,228.1 L1320,226.4 L1330,225.0 L1340,223.5 L1350,222.1 L1360,220.6 L1370,218.8 L1380,216.8 L1390,214.4 L1400,211.5 L1410,206.6 L1420,199.2 L1430,190.6 L1440,182.1 L1450,175.0 L1460,169.3 L1470,164.1 L1480,159.2 L1490,154.6 L1500,150.0 L1510,145.5 L1520,141.1 L1530,136.9 L1540,132.8 L1550,128.8 L1560,125.0"/></g><path d="M0,80.0 Q30,80.2 62,80.5"/><path d="M0,96.5 Q30,96.7 62,97.2"/><path d="M0,113.0 Q30,113.3 62,113.9"/><path d="M0,129.5 Q30,129.9 62,130.6"/><path d="M0,146.0 Q30,146.4 62,147.2"/><path d="M0,162.5 Q30,163.0 62,163.9"/><path d="M0,179.0 Q30,179.6 62,180.6"/><path d="M0,195.5 Q30,196.1 62,197.3"/><path d="M0,212.0 Q30,212.7 62,214.0"/><path d="M0,228.5 Q30,229.3 62,230.7"/><path d="M0,245.0 Q30,245.8 62,247.4"/><path d="M0,261.5 Q30,262.4 62,264.1"/><path d="M0,278.0 Q30,279.0 62,280.7"/><path d="M0,294.5 Q30,295.5 62,297.4"/><path d="M0,311.0 Q30,312.1 62,314.1"/><path d="M0,327.5 Q30,328.7 62,330.8"/><path d="M0,344.0 Q30,345.2 62,347.5"/><path d="M0,360.5 Q30,361.8 62,364.2"/><path d="M0,377.0 Q30,378.3 62,380.9"/><path d="M0,393.5 Q30,394.9 62,397.5"/><path d="M0,410.0 Q30,411.5 62,414.2"/><path d="M0,426.5 Q30,428.0 62,430.9"/><path d="M0,443.0 Q30,444.6 62,447.6"/><path d="M0,459.5 Q30,461.2 62,464.3"/><path d="M0,476.0 Q30,477.7 62,481.0"/><path d="M0,492.5 Q30,494.3 62,497.7"/><path d="M0,509.0 Q30,510.9 62,514.3"/><path d="M0,525.5 Q30,527.4 62,531.0"/><path d="M0,542.0 Q30,544.0 62,547.7"/><path d="M0,558.5 Q30,560.6 62,564.4"/><path d="M0,575.0 Q30,577.1 62,581.1"/><path d="M0,591.5 Q30,593.7 62,597.8"/><path d="M0,608.0 Q30,610.3 62,614.5"/><path d="M0,624.5 Q30,626.8 62,631.2"/><path d="M0,641.0 Q30,643.4 62,647.8"/><path d="M0,657.5 Q30,660.0 62,664.5"/><path d="M0,674.0 Q30,676.5 62,681.2"/><path d="M0,690.5 Q30,693.1 62,697.9"/><path d="M0,707.0 Q30,709.7 62,714.6"/><path d="M0,723.5 Q30,726.2 62,731.3"/><path d="M0,740.0 Q30,742.8 62,748.0"/><path d="M0,756.5 Q30,759.4 62,764.6"/><path d="M0,773.0 Q30,775.9 62,781.3"/><path d="M0,789.5 Q30,792.5 62,798.0"/><path d="M0,806.0 Q30,809.0 62,814.7"/><path d="M0,822.5 Q30,825.6 62,831.4"/><path d="M0,839.0 Q30,842.2 62,848.1"/><path d="M0,855.5 Q30,858.7 62,864.8"/><path d="M0,872.0 Q30,875.3 62,881.4"/><path d="M0,888.5 Q30,891.9 62,898.1"/><path d="M0,905.0 Q30,908.4 62,914.8"/><path d="M0,921.5 Q30,925.0 62,931.5"/><path d="M0,938.0 Q30,941.6 62,948.2"/><path d="M0,954.5 Q30,958.1 62,964.9"/><path d="M0,971.0 Q30,974.7 62,981.6"/><path d="M0,987.5 Q30,991.3 62,998.3"/><path d="M0,1004.0 Q30,1007.8 62,1014.9"/><path d="M0,1020.5 Q30,1024.4 62,1031.6"/><path d="M0,1037.0 Q30,1041.0 62,1048.3"/><path d="M0,1053.5 Q30,1057.5 62,1065.0"/><circle cx="1740" cy="330" r="258"/><circle cx="1740" cy="330" r="291"/><circle cx="1740" cy="330" r="324"/><circle cx="1740" cy="330" r="357"/><circle cx="1740" cy="330" r="390"/><circle cx="1740" cy="330" r="423"/><circle cx="1740" cy="330" r="456"/></g></svg>

<div id="win">
  <div id="toolbar"></div>
</div>
<svg class="abs" style="left:0;top:0" width="2000" height="160" viewBox="0 0 2000 160">
  <circle cx="94.5" cy="119.5" r="8" fill="#ec6a5e"/>
  <circle cx="122.3" cy="119.5" r="8" fill="#f4bf4f"/>
  <circle cx="149.8" cy="119.5" r="8" fill="#61c554"/>
  <g fill="none" stroke="#4b4b4b" stroke-width="1.85" stroke-linecap="round" stroke-linejoin="round">
    <rect x="195" y="108.5" width="24.5" height="18.5" rx="3.5"/>
    <line x1="203.5" y1="108.5" x2="203.5" y2="127"/>
    <polyline points="238.5,116.5 242.5,120.5 246.5,116.5"/>
    <polyline points="292.5,109.5 283.5,118.5 292.5,127.5"/>
    <polyline points="332.5,109.5 341.5,118.5 332.5,127.5"/>
  </g>
  <g fill="#4b4b4b"><rect x="198" y="111.5" width="3" height="1.6"/><rect x="198" y="115" width="3" height="1.6"/><rect x="198" y="118.5" width="3" height="1.6"/></g>
  <path d="M609.5,108.5 L600.8,112 L600.8,123.5 L609.5,130 Z" fill="#6e6e6e"/>
  <path d="M609.5,108.5 L618.2,112 L618.2,123.5 L609.5,130 L600.8,123.5 L600.8,112 Z" fill="none" stroke="#4b4b4b" stroke-width="1.8" stroke-linejoin="round"/>
  <line x1="609.5" y1="108.5" x2="609.5" y2="130" stroke="#4b4b4b" stroke-width="1.6"/>
  <rect x="642.5" y="100.8" width="788.5" height="38" rx="9.5" fill="#fafafa" stroke="#d6d6d6" stroke-width="1.6"/>
  <g fill="#9d9d9d"><rect x="977" y="118.3" width="11.8" height="9.8" rx="1.2"/></g>
  <path d="M979.6,118.8 V116.5 A3.3,3.3 0 0 1 986.2,116.5 V118.8" fill="none" stroke="#8f8f8f" stroke-width="1.7"/>
  <g fill="none" stroke="#3f3f3f" stroke-width="2" stroke-linecap="round" stroke-linejoin="round">
    <path d="M1422.4,120 A7,7 0 1 1 1418,113"/>
    <polyline points="1415.5,109.5 1419,113 1415.5,116.5"/>
  </g>
  <g fill="none" stroke="#4b4b4b" stroke-width="1.9" stroke-linecap="round" stroke-linejoin="round">
    <path d="M1870.5,112.8 H1867 Q1865,112.8 1865,114.8 V127 Q1865,129 1867,129 H1881 Q1883,129 1883,127 V114.8 Q1883,112.8 1881,112.8 H1877.5"/>
    <line x1="1874" y1="105.5" x2="1874" y2="120"/>
    <polyline points="1869.8,109.5 1874,105.2 1878.2,109.5"/>
    <line x1="1914.5" y1="117.8" x2="1931.8" y2="117.8"/>
    <line x1="1923.2" y1="109" x2="1923.2" y2="126.5"/>
    <path d="M1970.2,123 H1966.2 Q1964.5,123 1964.5,121.3 V108.7 Q1964.5,107 1966.2,107 H1978.8 Q1980.5,107 1980.5,108.7 V112.8"/>
    <rect x="1970.5" y="113" width="16" height="16" rx="2"/>
  </g>
  <rect x="1967" y="150.5" width="18" height="3.5" rx="1.75" fill="#8f9497" style="filter:blur(0.7px)"/>
</svg>
<div class="abs" style="left:1002px;top:107.7px;font-size:17.5px;color:#5c5c5c;line-height:24px;letter-spacing:0.85px">mybeer.bitrix24.ru</div>

<div id="blur">
<div class="title">Сделка №2805</div>
<svg class="stage" style="left:137.50px" width="81" height="45" viewBox="0 0 81 45"><path d="M5,0 H71 Q73.5,0 75,2.5 L80.5,22.5 L75,42.5 Q73.5,45 71,45 H5 Q0,45 0,40 V5 Q0,0 5,0 Z" fill="#d5ece9"/></svg><div class="abs" style="left:148.00px;top:265.5px;font-size:17px;font-weight:700;color:#c0c4c8;white-space:nowrap;line-height:20px">Не...</div>
<svg class="stage" style="left:224.42px" width="81" height="45" viewBox="0 0 81 45"><path d="M5,0 H71 Q73.5,0 75,2.5 L80.5,22.5 L75,42.5 Q73.5,45 71,45 H5 Q0,45 0,40 V5 Q0,0 5,0 Z" fill="#d5ece9"/></svg><div class="abs" style="left:234.92px;top:265.5px;font-size:17px;font-weight:700;color:#c0c4c8;white-space:nowrap;line-height:20px">Не...</div>
<svg class="stage" style="left:311.34px" width="81" height="45" viewBox="0 0 81 45"><path d="M5,0 H71 Q73.5,0 75,2.5 L80.5,22.5 L75,42.5 Q73.5,45 71,45 H5 Q0,45 0,40 V5 Q0,0 5,0 Z" fill="#e4e8eb"/></svg><div class="abs" style="left:321.84px;top:265.5px;font-size:17px;font-weight:700;color:#c0c4c8;white-space:nowrap;line-height:20px">Не...</div>
<svg class="stage" style="left:398.26px" width="81" height="45" viewBox="0 0 81 45"><path d="M5,0 H71 Q73.5,0 75,2.5 L80.5,22.5 L75,42.5 Q73.5,45 71,45 H5 Q0,45 0,40 V5 Q0,0 5,0 Z" fill="#e4e8eb"/><path d="M2,43.2 H72.5" stroke="#cde6f0" stroke-width="3.2"/></svg><div class="abs" style="left:408.76px;top:265.5px;font-size:17px;font-weight:700;color:#c0c4c8;white-space:nowrap;line-height:20px">Вы...</div>
<svg class="stage" style="left:485.18px" width="81" height="45" viewBox="0 0 81 45"><path d="M5,0 H71 Q73.5,0 75,2.5 L80.5,22.5 L75,42.5 Q73.5,45 71,45 H5 Q0,45 0,40 V5 Q0,0 5,0 Z" fill="#e4e8eb"/><path d="M2,43.2 H72.5" stroke="#cde6f0" stroke-width="3.2"/></svg><div class="abs" style="left:495.68px;top:265.5px;font-size:17px;font-weight:700;color:#c0c4c8;white-space:nowrap;line-height:20px">Уст...</div>
<svg class="stage" style="left:572.10px" width="81" height="45" viewBox="0 0 81 45"><path d="M5,0 H71 Q73.5,0 75,2.5 L80.5,22.5 L75,42.5 Q73.5,45 71,45 H5 Q0,45 0,40 V5 Q0,0 5,0 Z" fill="#e4e8eb"/><path d="M2,43.2 H72.5" stroke="#cde6f0" stroke-width="3.2"/></svg><div class="abs" style="left:582.60px;top:265.5px;font-size:17px;font-weight:700;color:#c0c4c8;white-space:nowrap;line-height:20px">Кли...</div>
<svg class="stage" style="left:659.02px" width="81" height="45" viewBox="0 0 81 45"><path d="M5,0 H71 Q73.5,0 75,2.5 L80.5,22.5 L75,42.5 Q73.5,45 71,45 H5 Q0,45 0,40 V5 Q0,0 5,0 Z" fill="#e4e8eb"/><path d="M2,43.2 H72.5" stroke="#cde6f0" stroke-width="3.2"/></svg><div class="abs" style="left:669.52px;top:265.5px;font-size:17px;font-weight:700;color:#c0c4c8;white-space:nowrap;line-height:20px">Кат...</div>
<svg class="stage" style="left:745.94px" width="81" height="45" viewBox="0 0 81 45"><path d="M5,0 H71 Q73.5,0 75,2.5 L80.5,22.5 L75,42.5 Q73.5,45 71,45 H5 Q0,45 0,40 V5 Q0,0 5,0 Z" fill="#e4e8eb"/><path d="M2,43.2 H72.5" stroke="#cde6f0" stroke-width="3.2"/></svg><div class="abs" style="left:756.44px;top:265.5px;font-size:17px;font-weight:700;color:#c0c4c8;white-space:nowrap;line-height:20px">КП ...</div>
<svg class="stage" style="left:832.86px" width="81" height="45" viewBox="0 0 81 45"><path d="M5,0 H71 Q73.5,0 75,2.5 L80.5,22.5 L75,42.5 Q73.5,45 71,45 H5 Q0,45 0,40 V5 Q0,0 5,0 Z" fill="#e4e8eb"/><path d="M2,43.2 H72.5" stroke="#cde6f0" stroke-width="3.2"/></svg><div class="abs" style="left:843.36px;top:265.5px;font-size:17px;font-weight:700;color:#c0c4c8;white-space:nowrap;line-height:20px">КП ...</div>
<svg class="stage" style="left:919.78px" width="81" height="45" viewBox="0 0 81 45"><path d="M5,0 H71 Q73.5,0 75,2.5 L80.5,22.5 L75,42.5 Q73.5,45 71,45 H5 Q0,45 0,40 V5 Q0,0 5,0 Z" fill="#e4e8eb"/><path d="M2,43.2 H72.5" stroke="#cde6f0" stroke-width="3.2"/></svg><div class="abs" style="left:930.28px;top:265.5px;font-size:17px;font-weight:700;color:#c0c4c8;white-space:nowrap;line-height:20px">Дог...</div>
<svg class="stage" style="left:1006.70px" width="81" height="45" viewBox="0 0 81 45"><path d="M5,0 H71 Q73.5,0 75,2.5 L80.5,22.5 L75,42.5 Q73.5,45 71,45 H5 Q0,45 0,40 V5 Q0,0 5,0 Z" fill="#e4e8eb"/></svg><div class="abs" style="left:1017.20px;top:265.5px;font-size:17px;font-weight:700;color:#c0c4c8;white-space:nowrap;line-height:20px">Зап...</div>
<svg class="stage" style="left:1093.62px" width="81" height="45" viewBox="0 0 81 45"><path d="M5,0 H71 Q73.5,0 75,2.5 L80.5,22.5 L75,42.5 Q73.5,45 71,45 H5 Q0,45 0,40 V5 Q0,0 5,0 Z" fill="#e4e8eb"/><path d="M2,43.2 H72.5" stroke="#cde6f0" stroke-width="3.2"/></svg><div class="abs" style="left:1104.12px;top:265.5px;font-size:17px;font-weight:700;color:#c0c4c8;white-space:nowrap;line-height:20px">Зак...</div>
<svg class="stage" style="left:1180.54px" width="81" height="45" viewBox="0 0 81 45"><path d="M5,0 H71 Q73.5,0 75,2.5 L80.5,22.5 L75,42.5 Q73.5,45 71,45 H5 Q0,45 0,40 V5 Q0,0 5,0 Z" fill="#e4e8eb"/><path d="M2,43.2 H72.5" stroke="#cde6f0" stroke-width="3.2"/></svg><div class="abs" style="left:1191.04px;top:265.5px;font-size:17px;font-weight:700;color:#c0c4c8;white-space:nowrap;line-height:20px">Счё...</div>
<svg class="stage" style="left:1267.46px" width="81" height="45" viewBox="0 0 81 45"><path d="M5,0 H71 Q73.5,0 75,2.5 L80.5,22.5 L75,42.5 Q73.5,45 71,45 H5 Q0,45 0,40 V5 Q0,0 5,0 Z" fill="#e4e8eb"/><path d="M2,43.2 H72.5" stroke="#cde6f0" stroke-width="3.2"/></svg><div class="abs" style="left:1277.96px;top:265.5px;font-size:17px;font-weight:700;color:#c0c4c8;white-space:nowrap;line-height:20px">Пр...</div>
<svg class="stage" style="left:1354.38px" width="81" height="45" viewBox="0 0 81 45"><path d="M5,0 H71 Q73.5,0 75,2.5 L80.5,22.5 L75,42.5 Q73.5,45 71,45 H5 Q0,45 0,40 V5 Q0,0 5,0 Z" fill="#e4e8eb"/><path d="M2,43.2 H72.5" stroke="#d3d3e6" stroke-width="3.2"/></svg><div class="abs" style="left:1364.88px;top:265.5px;font-size:17px;font-weight:700;color:#c0c4c8;white-space:nowrap;line-height:20px">Зак...</div>
<svg class="stage" style="left:1441.30px" width="81" height="45" viewBox="0 0 81 45"><path d="M5,0 H71 Q73.5,0 75,2.5 L80.5,22.5 L75,42.5 Q73.5,45 71,45 H5 Q0,45 0,40 V5 Q0,0 5,0 Z" fill="#e4e8eb"/><path d="M2,43.2 H72.5" stroke="#d3d3e6" stroke-width="3.2"/></svg><div class="abs" style="left:1451.80px;top:265.5px;font-size:17px;font-weight:700;color:#c0c4c8;white-space:nowrap;line-height:20px">Оп...</div>
<svg class="stage" style="left:1528.22px" width="81" height="45" viewBox="0 0 81 45"><path d="M5,0 H71 Q73.5,0 75,2.5 L80.5,22.5 L75,42.5 Q73.5,45 71,45 H5 Q0,45 0,40 V5 Q0,0 5,0 Z" fill="#e4e8eb"/><path d="M2,43.2 H72.5" stroke="#cbcbef" stroke-width="3.2"/></svg><div class="abs" style="left:1538.72px;top:265.5px;font-size:17px;font-weight:700;color:#c0c4c8;white-space:nowrap;line-height:20px">По...</div>
<svg class="stage" style="left:1615.14px" width="81" height="45" viewBox="0 0 81 45"><path d="M5,0 H71 Q73.5,0 75,2.5 L80.5,22.5 L75,42.5 Q73.5,45 71,45 H5 Q0,45 0,40 V5 Q0,0 5,0 Z" fill="#e4e8eb"/><path d="M2,43.2 H72.5" stroke="#f6c5bd" stroke-width="3.2"/></svg><div class="abs" style="left:1625.64px;top:265.5px;font-size:17px;font-weight:700;color:#c0c4c8;white-space:nowrap;line-height:20px">Ест...</div>
<svg class="stage" style="left:1702.06px" width="81" height="45" viewBox="0 0 81 45"><path d="M5,0 H71 Q73.5,0 75,2.5 L80.5,22.5 L75,42.5 Q73.5,45 71,45 H5 Q0,45 0,40 V5 Q0,0 5,0 Z" fill="#e4e8eb"/><path d="M2,43.2 H72.5" stroke="#f6c5bd" stroke-width="3.2"/></svg><div class="abs" style="left:1712.56px;top:265.5px;font-size:17px;font-weight:700;color:#c0c4c8;white-space:nowrap;line-height:20px">Пр...</div>
<svg class="stage" style="left:1788.98px" width="81" height="45" viewBox="0 0 81 45"><path d="M5,0 H71 Q73.5,0 75,2.5 L80.5,22.5 L75,42.5 Q73.5,45 71,45 H5 Q0,45 0,40 V5 Q0,0 5,0 Z" fill="#e4e8eb"/><path d="M2,43.2 H72.5" stroke="#d3d0ee" stroke-width="3.2"/></svg><div class="abs" style="left:1799.48px;top:265.5px;font-size:17px;font-weight:700;color:#c0c4c8;white-space:nowrap;line-height:20px">Ор...</div>
<svg class="stage" style="left:1875.90px" width="81" height="45" viewBox="0 0 81 45"><path d="M5,0 H71 Q73.5,0 75,2.5 L80.5,22.5 L75,42.5 Q73.5,45 71,45 H5 Q0,45 0,40 V5 Q0,0 5,0 Z" fill="#e4e8eb"/><path d="M2,43.2 H72.5" stroke="#d6eecf" stroke-width="3.2"/></svg><div class="abs" style="left:1886.40px;top:265.5px;font-size:17px;font-weight:700;color:#c0c4c8;white-space:nowrap;line-height:20px">Зав...</div>
<div class="tab" style="left:162px">Общие</div>
<div class="tab" style="left:576px">Входящие оплаты</div>
<div class="tab" style="left:812px;letter-spacing:0.4px">История</div>
<div class="tab" style="left:951px">Еще</div>
<svg class="abs" style="left:1005px;top:345px" width="14" height="10" viewBox="0 0 14 10"><polyline points="2,2.5 7,7.5 12,2.5" fill="none" stroke="#c9cdd1" stroke-width="2.4" stroke-linecap="round"/></svg>
</div>
<div class="abs" style="left:285px;top:337px;font-size:20.2px;font-weight:700;color:#2153c3;white-space:nowrap;line-height:26px">Бронирование товаров</div>
<div class="abs" style="left:284px;top:372.6px;width:238.5px;height:3.2px;background:#2153c3;border-radius:1px"></div>

<div id="card"></div>
<div class="abs" style="left:178px;top:448.3px;font-size:38px;font-weight:700;color:#212529;white-space:nowrap;line-height:46px;letter-spacing:0px">Каталог товаров</div>
<div class="abs btn" style="left:179px;top:514px;width:229px;height:58px;border:1.5px solid #3f9466;border-radius:9px;color:#198754;background:#fff;-webkit-text-stroke:0.25px #198754">Добавить товары</div>
<div class="abs btn" style="left:416px;top:514px;width:159px;height:58px;border-radius:9px;color:#fff;background:#0d6efd;-webkit-text-stroke:0.3px #fff">Сохранить</div>
<table id="tbl" class="abs" style="left:177px;top:594.5px">
<colgroup><col style="width:103px"><col style="width:405.2px"><col style="width:263.5px"><col style="width:189.3px"><col style="width:171.3px"><col style="width:126.2px"><col style="width:101.25px"><col style="width:117.5px"><col style="width:73.75px"><col style="width:95.8px"></colgroup>
<tr class="hd"><th>Артикул<br>1С</th><th>Название</th><th>Серия</th><th>Цена</th><th>Кол-во</th><th>Сумма</th><th>Остаток<br>1С</th><th>Резерв<br>Б24</th><th>Итого</th><th>Удалить</th></tr>
<tr><td class="c">3300</td><td class="l">Пиво светлое непастеризованное<br>нефильтрованное неосветленное<br>пшеничное верхового брожения "Айингер<br>Бройвайссе", в бутылке 0,5л.</td><td class="l">№00000685 партия<br>№220924/5082175/1 до<br>05.07.2025</td><td class="c"><div class="inp" style="width:173px">1000</div></td><td class="c"><div class="inp" style="width:155px">5000</div></td><td class="c">5000000.00</td><td class="c">20000</td><td class="c"><a>5000</a></td><td class="c">15000</td><td class="c"><div class="cb"></div></td></tr>
<tr><td class="c">780</td><td class="l">Пиво темное непастеризованное<br>фильтрованное ячменное крепкое<br>низового брожения "Айингер<br>Целебратор", кег 30 л</td><td class="l">№00000193 партия №<br>171223/5032812 до<br>17.11.2024</td><td class="c"><div class="inp" style="width:173px">500</div></td><td class="c"><div class="inp" style="width:155px">600</div></td><td class="c">300000.00</td><td class="c">10000</td><td class="c"><a>8</a></td><td class="c">9992</td><td class="c"><div class="cb"></div></td></tr>
</table>

</body></html>
